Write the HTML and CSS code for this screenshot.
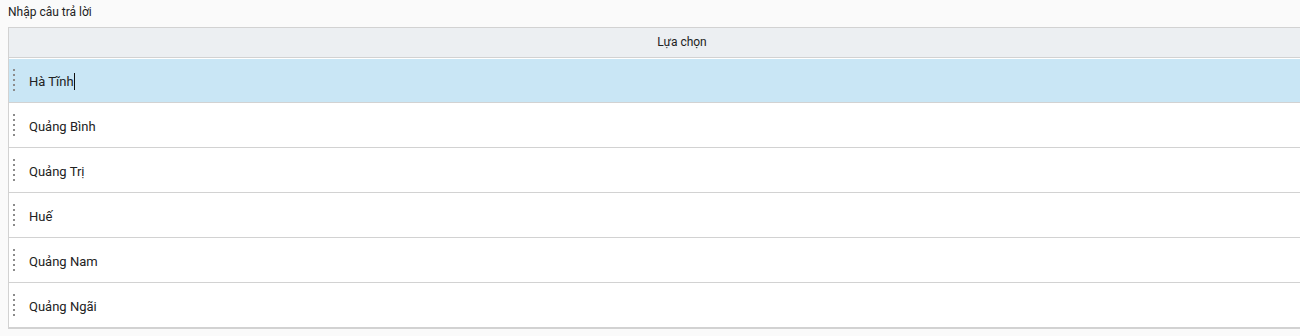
FILE: index.html
```html
<!DOCTYPE html>
<html lang="vi">
<head>
    <meta charset="UTF-8">
    <meta name="viewport" content="width=device-width, initial-scale=1.0">
    <title>Nhập câu trả lời</title>
    <link rel="stylesheet" href="styles.css">
</head>
<body>
    <div class="answer-box">
        <div class="answer-label">Nhập câu trả lời</div>
        <div class="choice-table">
            <div class="choice-head">Lựa chọn</div>
            <div class="choice-row active">
                <span class="handle"></span>
                <span class="choice-text">Hà Tĩnh<span class="caret"></span></span>
            </div>
            <div class="choice-row">
                <span class="handle"></span>
                <span class="choice-text">Quảng Bình</span>
            </div>
            <div class="choice-row">
                <span class="handle"></span>
                <span class="choice-text">Quảng Trị</span>
            </div>
            <div class="choice-row">
                <span class="handle"></span>
                <span class="choice-text">Huế</span>
            </div>
            <div class="choice-row">
                <span class="handle"></span>
                <span class="choice-text">Quảng Nam</span>
            </div>
            <div class="choice-row">
                <span class="handle"></span>
                <span class="choice-text">Quảng Ngãi</span>
            </div>
        </div>
    </div>
</body>
</html>
```

FILE: styles.css
```css
body {
    margin: 0;
    background-color: #fafafa;
    font-family: Roboto, "Liberation Sans", sans-serif;
    color: #222;
    overflow: hidden;
}

.answer-box {
    padding: 5px 0 0 8px;
}

.answer-label {
    font-size: 12px;
    line-height: 15px;
    height: 22px;
    color: #222;
}

.choice-table {
    width: 1346px;
    border: 1px solid #d2d2d2;
    border-right: none;
    background-color: #ffffff;
}

.choice-head {
    height: 29px;
    line-height: 29px;
    text-align: center;
    font-size: 12px;
    background-color: #eceff2;
    border-bottom: 1px solid #d2d2d2;
}

.choice-row {
    display: flex;
    align-items: center;
    height: 44px;
    border-bottom: 1px solid #d2d2d2;
}

.choice-row.active {
    background-color: #c9e6f5;
    box-shadow: inset 0 1px 0 #ffffff;
}

/* drag handle: five small dots */
.handle {
    width: 2px;
    height: 22px;
    margin-left: 4px;
    background-image: linear-gradient(#8c8c8c 2px, transparent 2px);
    background-size: 2px 5px;
    background-repeat: repeat-y;
}

.choice-text {
    margin-left: 14px;
    padding-top: 3px;
    font-size: 13px;
    display: flex;
    align-items: center;
}

.caret {
    display: inline-block;
    width: 1px;
    height: 17px;
    background-color: #111;
}
```
